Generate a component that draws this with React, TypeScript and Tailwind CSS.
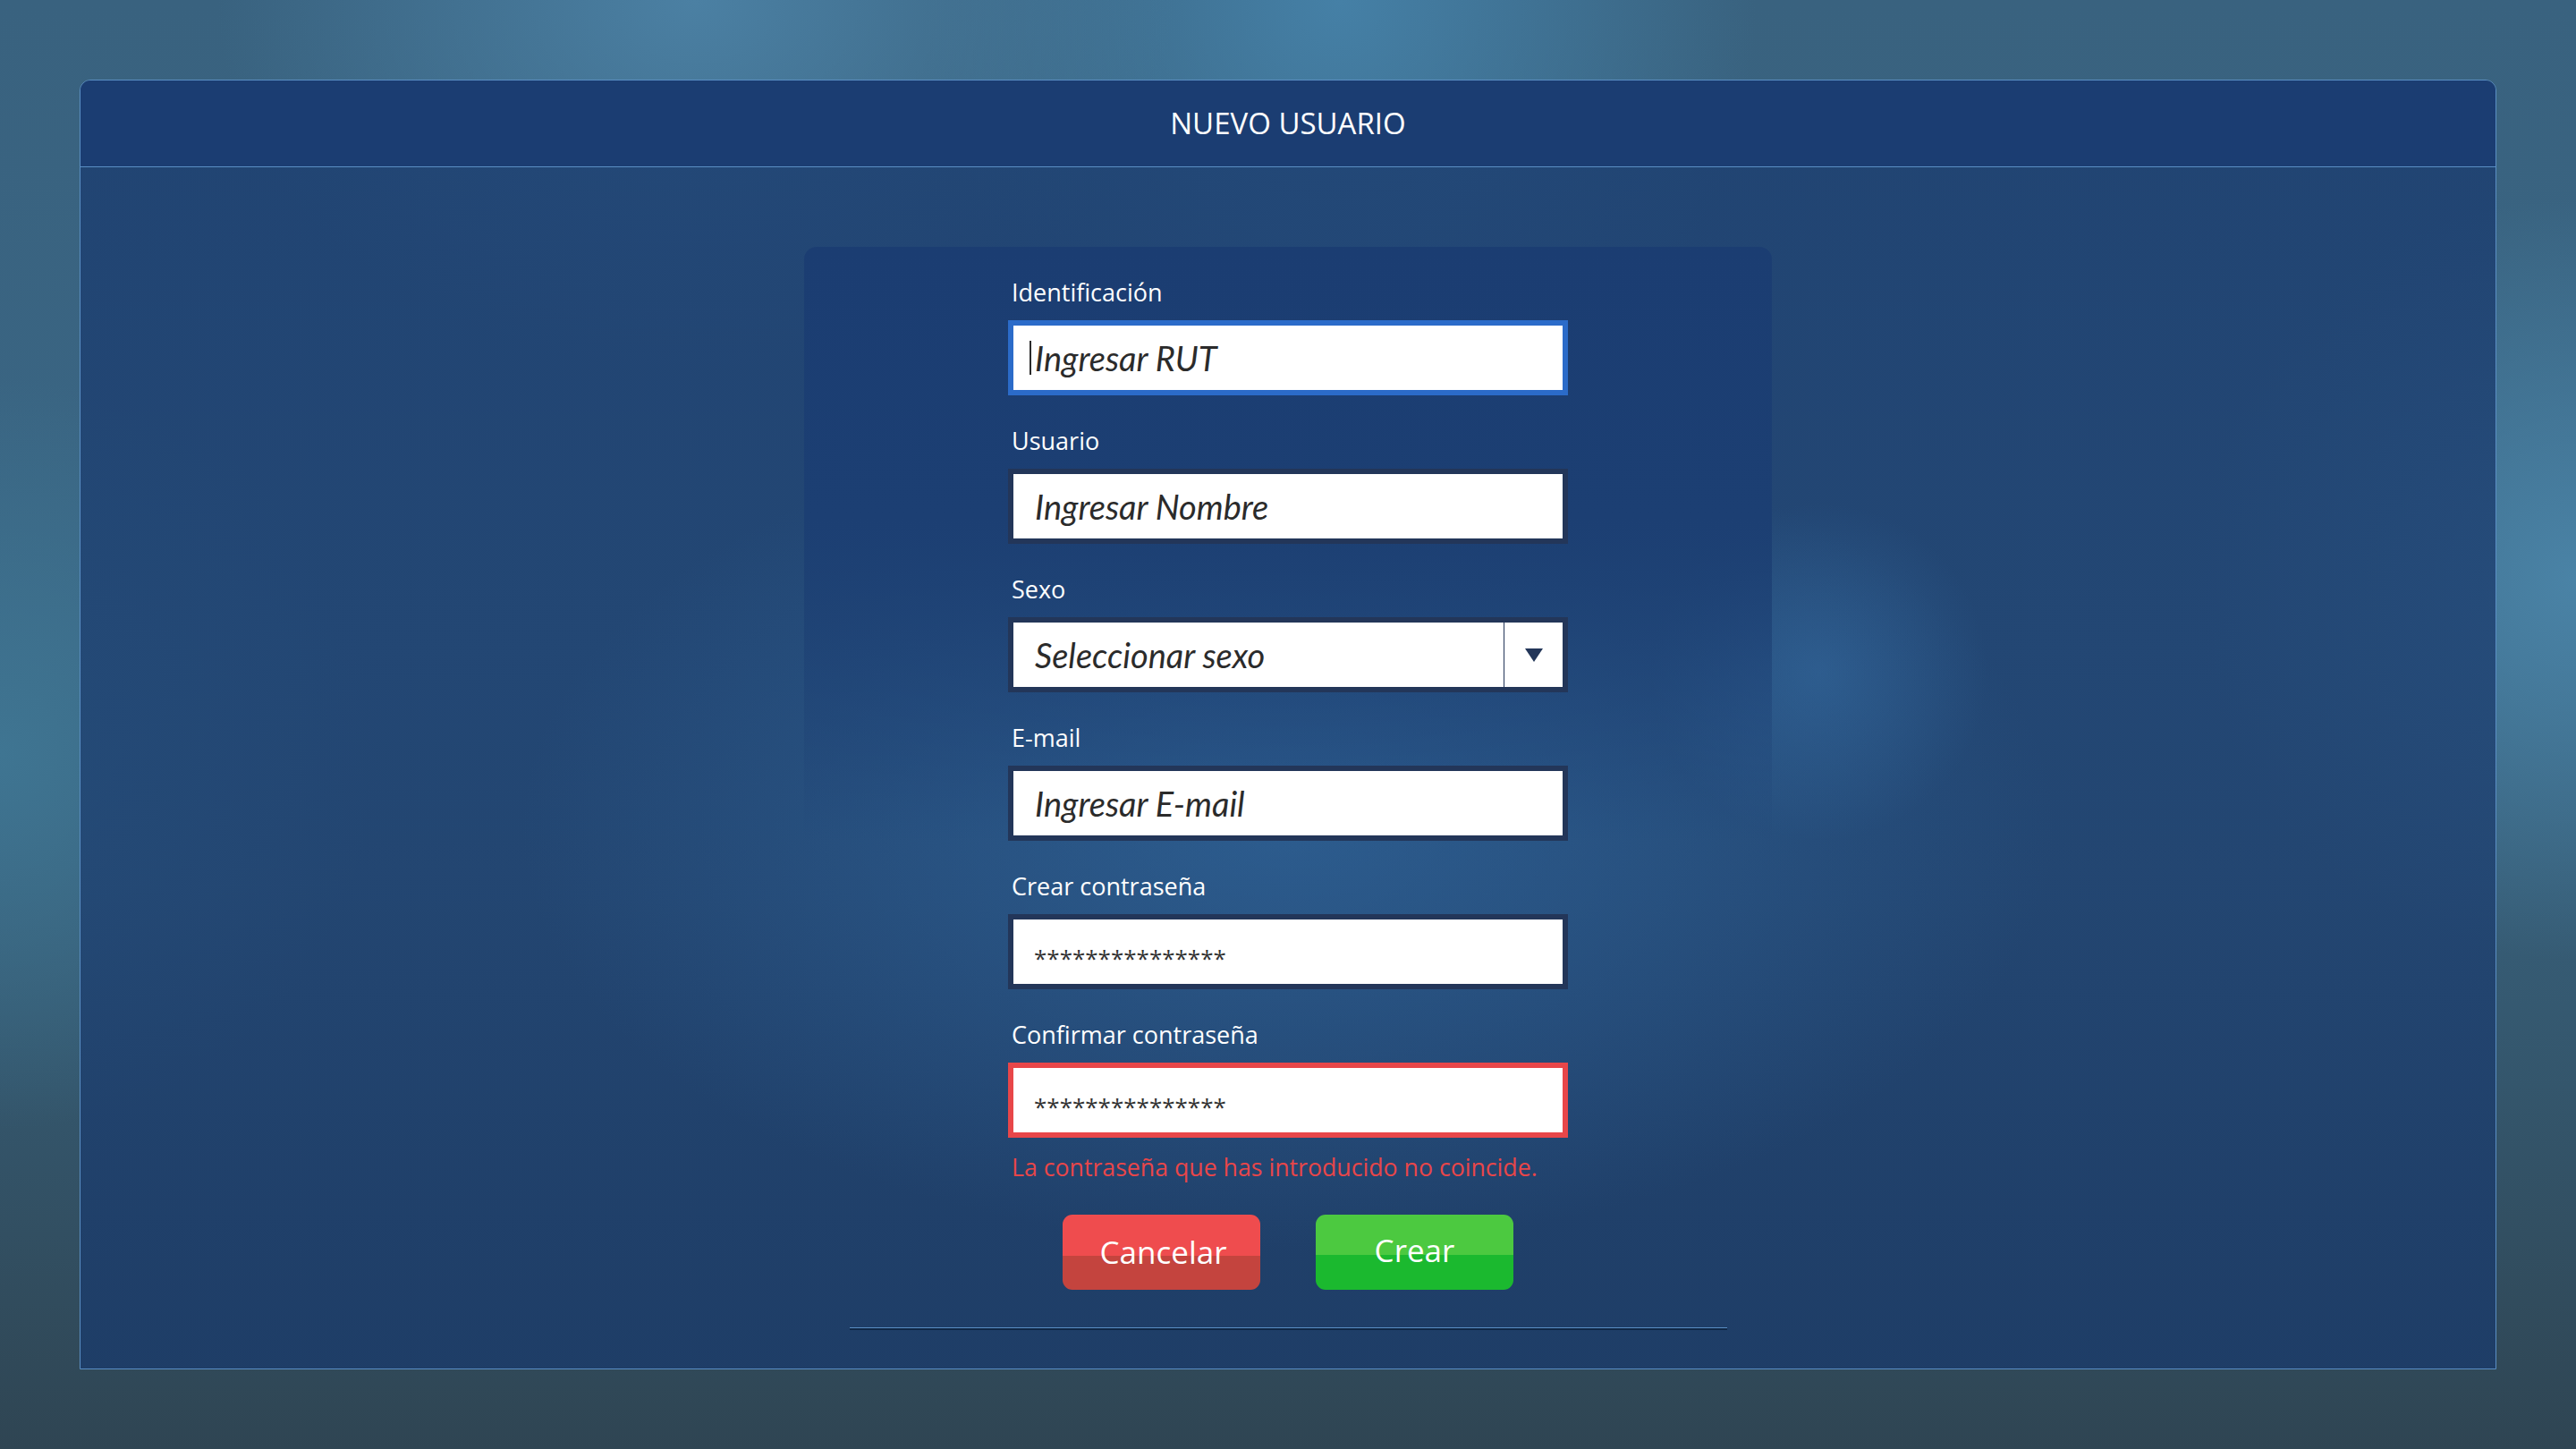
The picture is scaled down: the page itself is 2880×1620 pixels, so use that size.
import React from 'react';

const font = { fontFamily: '"Open Sans", "Noto Sans", Arial, sans-serif' };
const inputFont = { fontFamily: 'Lato, "Open Sans", Arial, sans-serif' };

const Label: React.FC<{ text: string }> = ({ text }) => (
  <label className="block pl-[4px] text-[27px] leading-[36px] text-white">{text}</label>
);

const TextField: React.FC<{ placeholder: string; tone?: 'focus' | 'normal'; caret?: boolean }> = ({
  placeholder,
  tone = 'normal',
  caret,
}) => (
  <div className="relative mt-[13px]">
    <input
      type="text"
      placeholder={placeholder}
      style={inputFont}
      className={
        'block h-[84px] w-full border-[6px] bg-white pl-[24px] text-[38px] italic text-[#2b2b2b] outline-none placeholder:text-[#2b2b2b] ' +
        (tone === 'focus' ? 'border-[#2b6bc9]' : 'border-[#233659]')
      }
    />
    {caret && <span className="absolute left-[24px] top-[23px] h-[38px] w-[2px] bg-[#2b2b2b]" />}
  </div>
);

const PasswordField: React.FC<{ error?: boolean }> = ({ error }) => (
  <div className="mt-[13px]">
    <input
      type="text"
      readOnly
      value="***************"
      className={
        'block h-[84px] w-full border-[6px] bg-white pl-[23px] pt-[14px] text-[26px] text-[#333] outline-none ' +
        (error ? 'border-[#e84649]' : 'border-[#233659]')
      }
    />
  </div>
);

const SelectField: React.FC = () => (
  <div className="mt-[13px] flex h-[84px] w-full border-[6px] border-[#233659] bg-white">
    <div style={inputFont} className="flex flex-1 items-center pl-[24px] text-[38px] italic text-[#2b2b2b]">
      Seleccionar sexo
    </div>
    <div className="flex w-[66px] items-center justify-center border-l border-[#233659]">
      <svg width="20" height="15" viewBox="0 0 20 15">
        <path d="M0 0 L20 0 L10 15 Z" fill="#233659" />
      </svg>
    </div>
  </div>
);

const App: React.FC = () => {
  return (
    <div
      style={font}
      className="h-screen w-full p-[89px] bg-[radial-gradient(ellipse_at_27%_0%,#4b80a3_0%,transparent_18%),radial-gradient(ellipse_at_52%_0%,#4580a6_0%,transparent_22%),radial-gradient(circle_at_100%_40%,#4a83a6_0%,transparent_14%),radial-gradient(circle_at_0%_52%,#3f7592_0%,transparent_14%),linear-gradient(to_bottom,#39627f_0%,#3a6684_45%,#34566c_75%,#2f4553_100%)]"
    >
      <div className="flex h-full flex-col rounded-t-[12px] border border-[#5b8fc4] overflow-hidden">
        <div className="flex h-[97px] shrink-0 items-center justify-center border-b border-[#5b8fc4] bg-[#1b3d72] text-[33px] text-white">
          NUEVO USUARIO
        </div>

        <div className="flex flex-1 flex-col items-center bg-[radial-gradient(ellipse_at_50%_55%,rgba(52,110,165,0.55)_0%,transparent_45%),radial-gradient(circle_at_72%_42%,rgba(60,120,175,0.4)_0%,transparent_9%),linear-gradient(to_bottom,rgba(28,62,112,0.82),rgba(30,64,112,0.8)_60%,rgba(28,60,105,0.88))] pt-[89px]">
          <div className="w-[1082px] rounded-t-[14px] bg-[linear-gradient(to_bottom,#1b3d72_0%,#1c3f73_25%,rgba(30,66,116,0)_55%)] pt-[33px]">
            <div className="mx-auto w-[626px]">
              <Label text="Identificación" />
              <TextField placeholder="Ingresar RUT" tone="focus" caret />

              <div className="mt-[33px]">
                <Label text="Usuario" />
                <TextField placeholder="Ingresar Nombre" />
              </div>

              <div className="mt-[33px]">
                <Label text="Sexo" />
                <SelectField />
              </div>

              <div className="mt-[33px]">
                <Label text="E-mail" />
                <TextField placeholder="Ingresar E-mail" />
              </div>

              <div className="mt-[33px]">
                <Label text="Crear contraseña" />
                <PasswordField />
              </div>

              <div className="mt-[33px]">
                <Label text="Confirmar contraseña" />
                <PasswordField error />
              </div>

              <p className="mt-[16px] pl-[4px] text-[26.7px] leading-[34px] text-[#e84649]">
                La contraseña que has introducido no coincide.
              </p>

              <div className="mt-[36px] flex justify-center gap-[62px]">
                <button className="h-[84px] w-[221px] overflow-hidden rounded-[11px] bg-[linear-gradient(to_bottom,#ef4c4e_0%,#ef4c4e_55%,#c4443e_55%,#c4443e_100%)] pl-[4px] text-[35px] text-white">
                  Cancelar
                </button>
                <button className="h-[84px] w-[221px] overflow-hidden rounded-[11px] bg-[linear-gradient(to_bottom,#4cc940_0%,#4cc940_54%,#1bb92f_54%,#1bb92f_100%)] pb-[4px] text-[35px] text-white">
                  Crear
                </button>
              </div>
            </div>

            <div className="mx-auto mt-[42px] h-[3px] w-[981px] border-t border-[#5b8fc4] bg-[#0f2745]" />
          </div>
        </div>
      </div>
    </div>
  );
};

export default App;
